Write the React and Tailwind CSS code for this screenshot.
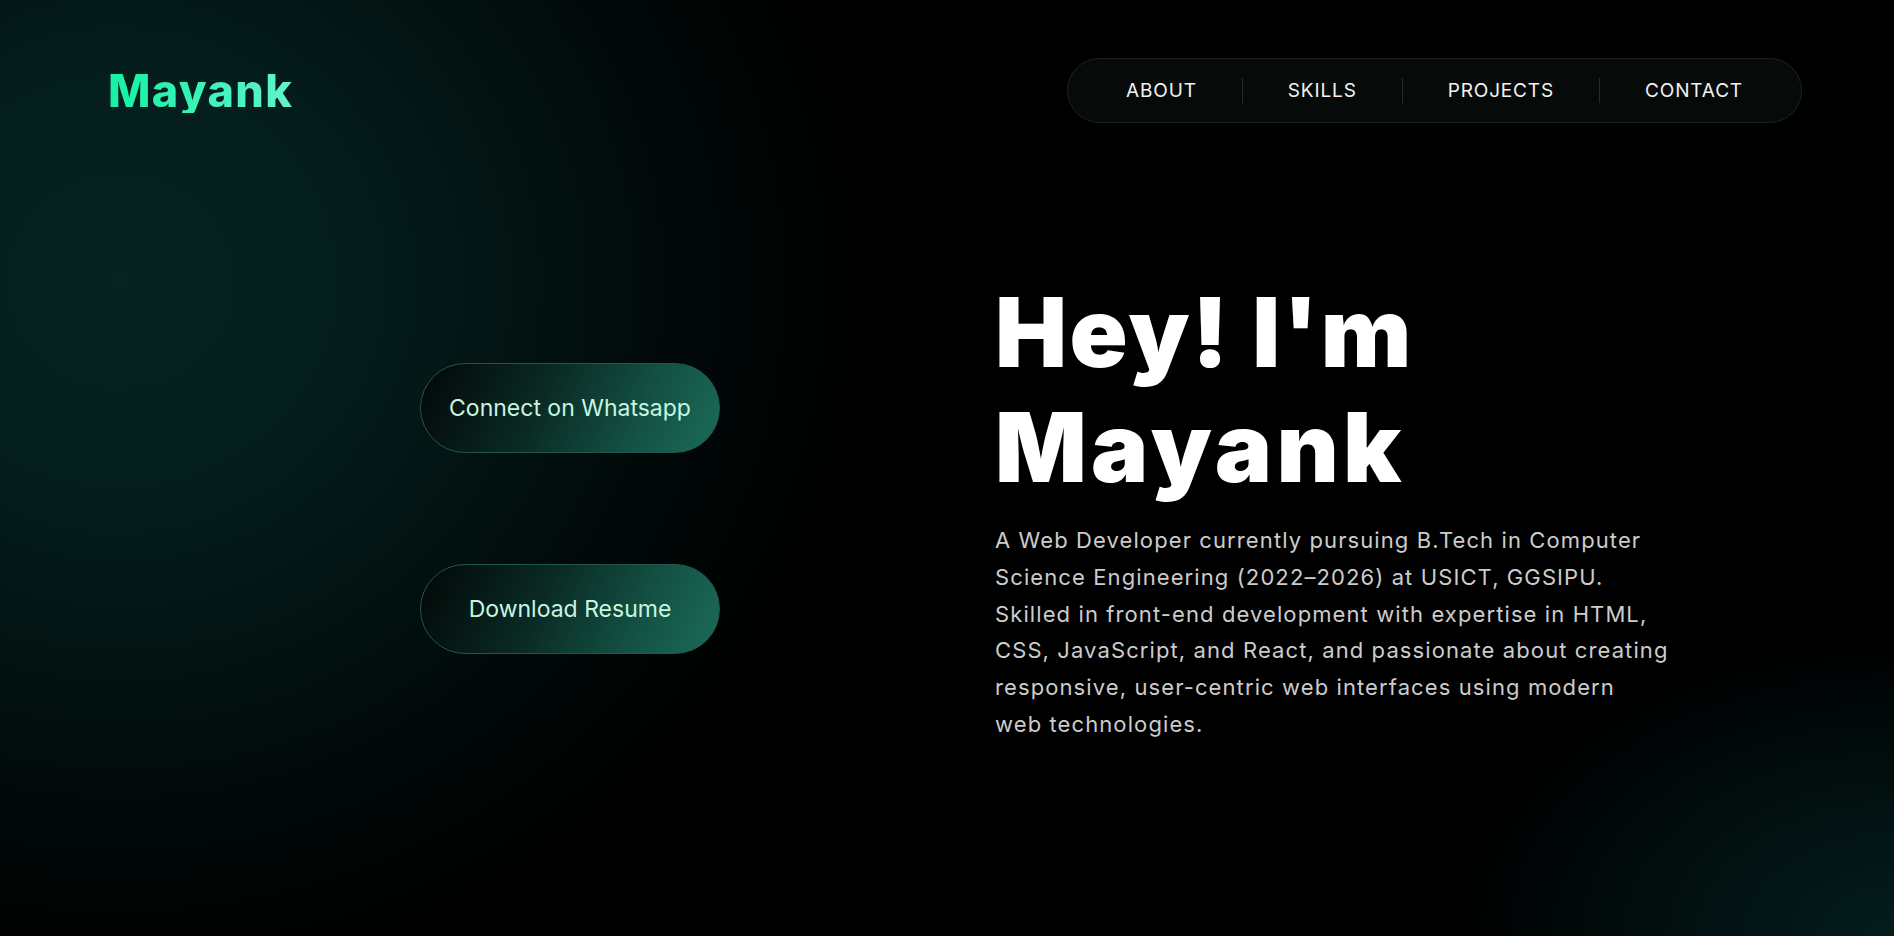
import React from "react";

const NAV = ["ABOUT", "SKILLS", "PROJECTS", "CONTACT"];

export default function App() {
  return (
    <div
      className="relative h-[936px] w-full overflow-hidden bg-black bg-[radial-gradient(ellipse_1000px_950px_at_120px_280px,#052321_0%,#041e1d_22%,#021312_40%,#010908_56%,rgba(0,0,0,0)_76%),radial-gradient(ellipse_560px_380px_at_100%_100%,#041d1d_0%,#020f0f_40%,rgba(0,0,0,0)_80%)]"
      style={{ fontFamily: "Inter, 'Noto Sans', sans-serif" }}
    >
      <header className="flex items-center justify-between pl-[108px] pr-[92px] pt-[58px]">
        <div className="bg-[linear-gradient(90deg,#14f2a2,#62f3cd)] bg-clip-text text-[45px] font-extrabold leading-none tracking-[0.03em] text-transparent">
          Mayank
        </div>
        <nav className="flex h-[65px] items-center rounded-full border border-[#1c2322] bg-[#060b0a] px-[13px]">
          {NAV.map((item, i) => (
            <React.Fragment key={item}>
              {i > 0 && <span className="h-[25px] w-px bg-[#262c2b]" />}
              <a className="px-[45px] text-[19px] leading-none tracking-[0.045em] text-[#f2f2f2]">
                {item}
              </a>
            </React.Fragment>
          ))}
        </nav>
      </header>

      <main className="mt-[152px] flex items-center pl-[420px]">
        <div className="flex w-[300px] flex-col gap-[111px]">
          <button className="flex h-[90px] w-[300px] items-center justify-center rounded-full border border-[#23564a] bg-[linear-gradient(115deg,#020706_0%,#0a2a24_40%,#145446_75%,#1b6b59_100%)] text-[23px] text-[#c6f6e0]">
            Connect on Whatsapp
          </button>
          <button className="flex h-[90px] w-[300px] items-center justify-center rounded-full border border-[#23564a] bg-[linear-gradient(115deg,#020706_0%,#0a2a24_40%,#145446_75%,#1b6b59_100%)] text-[23px] text-[#c6f6e0]">
            Download Resume
          </button>
        </div>

        <div className="ml-[275px] flex flex-col">
          <h1 className="text-[96px] font-black leading-[1.2] tracking-[0.025em] text-white">
            Hey! I'm
            <br />
            <span className="tracking-[0.045em]">Mayank</span>
          </h1>
          <p className="mt-[17px] whitespace-nowrap text-[22px] leading-[36.7px] tracking-[0.05em] text-[#cccccc]">
            A Web Developer currently pursuing B.Tech in Computer
            <br />
            Science Engineering (2022–2026) at USICT, GGSIPU.
            <br />
            Skilled in front-end development with expertise in HTML,
            <br />
            CSS, JavaScript, and React, and passionate about creating
            <br />
            responsive, user-centric web interfaces using modern
            <br />
            web technologies.
          </p>
        </div>
      </main>
    </div>
  );
}
